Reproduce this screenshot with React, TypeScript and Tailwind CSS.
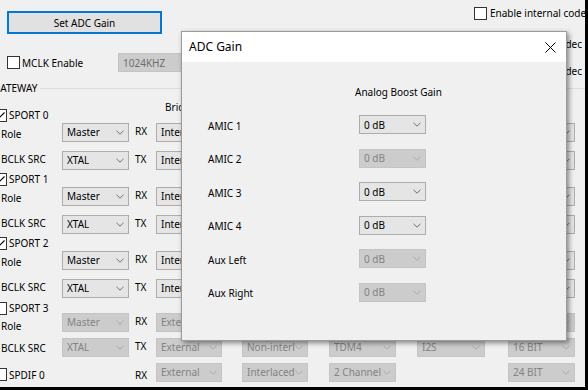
import React from "react";

type ComboProps = { text?: string; disabled?: boolean; className?: string; hidden?: boolean };

function Chevron({ disabled }: { disabled?: boolean }) {
  return (
    <svg width="8" height="5" viewBox="0 0 8 5" className="shrink-0">
      <polyline
        points="0.5,0.8 4,4.2 7.5,0.8"
        fill="none"
        stroke={disabled ? "#ababab" : "#6e6e6e"}
        strokeWidth="1"
      />
    </svg>
  );
}

function Combo({ text = "", disabled, className = "", hidden }: ComboProps) {
  if (hidden) return <div className={`h-[19px] shrink-0 ${className}`} />;
  return (
    <div
      className={`flex h-[19px] shrink-0 items-center justify-between overflow-hidden whitespace-nowrap border pl-[4px] pr-[4px] ${
        disabled ? "border-[#c4c4c4] bg-[#cccccc] text-[#838383]" : "border-[#adadad] bg-[#e5e5e5] text-black"
      } ${className}`}
    >
      <span className="overflow-hidden">{text}</span>
      <Chevron disabled={disabled} />
    </div>
  );
}

function Check({ checked, className = "" }: { checked?: boolean; className?: string }) {
  return (
    <div
      className={`flex h-[13px] w-[13px] shrink-0 items-center justify-center border border-[#333333] bg-white ${className}`}
    >
      {checked && (
        <svg width="11" height="11" viewBox="0 0 11 11">
          <polyline points="1.5,5.5 4,8 9.5,2.5" fill="none" stroke="#000" strokeWidth="1.1" />
        </svg>
      )}
    </div>
  );
}

type Cells = { texts: (string | null)[]; disabled?: boolean };

function RightCells({ texts, disabled }: Cells) {
  const widths = ["w-[66px]", "ml-[20px] w-[66px]", "ml-[21px] w-[67px]", "ml-[21px] w-[68px]", "ml-[23px] w-[67px]"];
  return (
    <>
      {texts.map((t, i) => (
        <Combo key={i} text={t ?? ""} hidden={t === null} disabled={disabled} className={widths[i]} />
      ))}
    </>
  );
}

function GRow({
  label,
  left,
  leftDisabled,
  dir,
  cells,
  labelCls = "mt-[4px]",
}: {
  label: string;
  left: string;
  leftDisabled?: boolean;
  dir: string;
  cells: Cells;
  labelCls?: string;
}) {
  return (
    <div className="flex h-[20px] shrink-0 items-center">
      <span className={`w-[62px] shrink-0 pl-[1px] ${labelCls}`}>{label}</span>
      <Combo text={left} disabled={leftDisabled} className="w-[67px]" />
      <span className="mb-[3px] w-[27px] shrink-0 pl-[6px]">{dir}</span>
      <RightCells {...cells} />
    </div>
  );
}

function Header({ label, checked }: { label: string; checked?: boolean }) {
  return (
    <div className="flex h-[14px] shrink-0 items-center">
      <Check checked={checked} className="-ml-[6px]" />
      <span className="ml-[2px]">{label}</span>
    </div>
  );
}

const enabledCells = (first: string): Cells => ({ texts: [first, "Non-interl", "TDM4", "I2S", "16 BIT"] });

export default function App() {
  return (
    <div className="relative box-border h-[390px] w-[588px] overflow-hidden border-b-[3px] border-r-[3px] border-black bg-[#f0f0f0] font-['Noto_Sans',sans-serif] text-[10px] leading-[14px] text-black">
      {/* top area */}
      <div className="flex h-[81px]">
        <div className="flex w-[474px] shrink-0 flex-col">
          <div className="ml-[7px] mt-[11px] flex h-[23px] w-[155px] items-center justify-center border-2 border-[#0078d7] bg-[#e1e1e1]">
            Set ADC Gain
          </div>
          <div className="mt-[19px] flex h-[19px] items-center">
            <Check className="ml-[7px]" />
            <span className="ml-[2px] w-[96px] shrink-0">MCLK Enable</span>
            <div className="flex h-[19px] w-[90px] items-center border border-[#c4c4c4] bg-[#cccccc] pl-[4px] text-[#6d6d6d]">
              1024KHZ
            </div>
          </div>
        </div>
        <div className="flex flex-col whitespace-nowrap pt-[6px]">
          <div className="flex h-[14px] items-center">
            <Check />
            <span className="ml-[3px]">Enable internal codec</span>
          </div>
          <div className="mt-[17px] flex h-[14px] w-[108px] items-center justify-end">
            <Check />
            <span className="ml-[3px]">Use external codec</span>
          </div>
          <div className="mt-[13px] flex h-[14px] w-[108px] items-center justify-end">
            <Check />
            <span className="ml-[3px]">Bypass codec</span>
          </div>
        </div>
      </div>

      {/* group box title */}
      <div className="flex h-[14px] items-center">
        <span className="-ml-[7px] whitespace-nowrap">GATEWAY</span>
        <div className="ml-[3px] h-px flex-1 bg-[#dcdcdc]" />
      </div>
      <div className="h-[5px]" />

      {/* gateway rows */}
      <div className="flex flex-col">
        <div className="flex h-[22px]">
          <div className="flex h-[14px] w-[165px] shrink-0 items-center self-end">
            <Check checked className="-ml-[6px]" />
            <span className="ml-[2px]">SPORT 0</span>
          </div>
          <span className="self-start">Bridge</span>
        </div>
        <GRow label="Role" left="Master" dir="RX" cells={enabledCells("Internal")} />
        <div className="h-[8px]" />
        <GRow label="BCLK SRC" left="XTAL" dir="TX" cells={enabledCells("Internal")} labelCls="mb-[2px]" />

        <div className="h-[2px]" />
        <Header label="SPORT 1" checked />
        <GRow label="Role" left="Master" dir="RX" cells={enabledCells("Internal")} />
        <div className="h-[8px]" />
        <GRow label="BCLK SRC" left="XTAL" dir="TX" cells={enabledCells("Internal")} labelCls="mb-[2px]" />

        <div className="h-[2px]" />
        <Header label="SPORT 2" checked />
        <GRow label="Role" left="Master" dir="RX" cells={enabledCells("Internal")} />
        <div className="h-[8px]" />
        <GRow label="BCLK SRC" left="XTAL" dir="TX" cells={enabledCells("Internal")} labelCls="mb-[2px]" />

        <div className="h-[2px]" />
        <div className="flex h-[12px] items-end">
          <Check className="-ml-[6px] mb-[-3px]" />
          <span className="mb-[-3px] ml-[2px]">SPORT 3</span>
        </div>
        <GRow
          label="Role"
          left="Master"
          leftDisabled
          dir="RX"
          cells={{ texts: ["External", "Non-interl", "TDM4", "I2S", "16 BIT"], disabled: true }}
          labelCls="mt-[8px]"
        />
        <div className="h-[5px]" />
        <GRow
          label="BCLK SRC"
          left="XTAL"
          leftDisabled
          dir="TX"
          cells={{ texts: ["External", "Non-interl", "TDM4", "I2S", "16 BIT"], disabled: true }}
          labelCls="mt-[2px]"
        />
        <div className="h-[5px]" />
        <div className="flex h-[20px] shrink-0 items-center">
          <div className="mt-[5px] flex w-[129px] shrink-0 items-center">
            <Check className="-ml-[6px]" />
            <span className="ml-[2px]">SPDIF 0</span>
          </div>
          <span className="mt-[5px] w-[27px] shrink-0 pl-[6px]">RX</span>
          <RightCells texts={["External", "Interlaced", "2 Channel", null, "24 BIT"]} disabled />
        </div>
      </div>

      {/* ADC Gain dialog */}
      <div className="absolute left-[181px] top-[31px] flex h-[310px] w-[386px] flex-col border border-[#9b9b9b] bg-[#f0f0f0] shadow-[2px_2px_5px_rgba(0,0,0,0.45)]">
        <div className="flex h-[30px] shrink-0 items-center justify-between bg-white pl-[7px] pr-[10px]">
          <span className="text-[12px]">ADC Gain</span>
          <svg width="11" height="11" viewBox="0 0 11 11">
            <path d="M0.5 0.5 L10.5 10.5 M10.5 0.5 L0.5 10.5" stroke="#000" strokeWidth="1" />
          </svg>
        </div>
        <div className="flex flex-col">
          <div className="mt-[23px] flex h-[14px] items-center pl-[173px] whitespace-nowrap">Analog Boost Gain</div>
          <div className="mt-[16px] grid grid-cols-[151px_67px] items-center gap-y-[14.6px] pl-[26px]">
            <span className="mt-[2px]">AMIC 1</span>
            <Combo text="0 dB" />
            <span className="mt-[2px]">AMIC 2</span>
            <Combo text="0 dB" disabled />
            <span className="mt-[2px]">AMIC 3</span>
            <Combo text="0 dB" className="border-[#8f9fb8]" />
            <span className="mt-[2px]">AMIC 4</span>
            <Combo text="0 dB" />
            <span className="mt-[2px]">Aux Left</span>
            <Combo text="0 dB" disabled />
            <span className="mt-[2px]">Aux Right</span>
            <Combo text="0 dB" disabled />
          </div>
        </div>
      </div>
    </div>
  );
}
